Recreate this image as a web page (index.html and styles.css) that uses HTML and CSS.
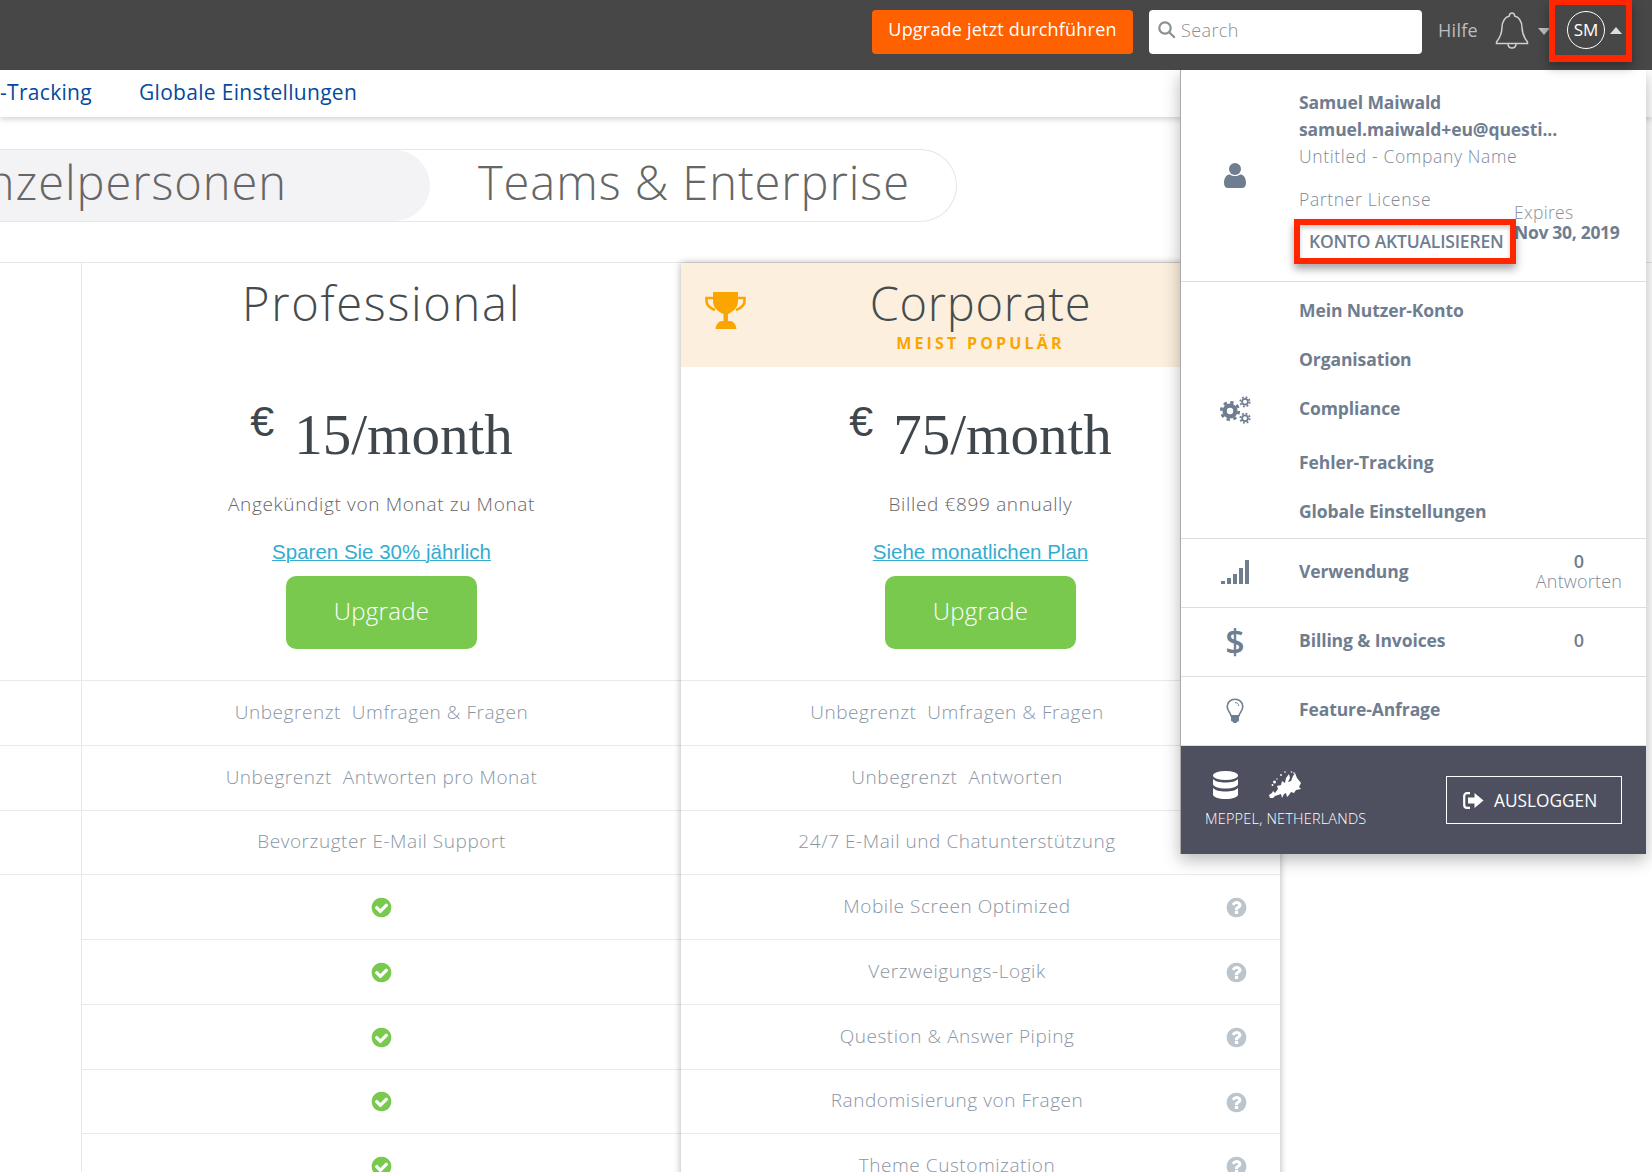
FILE: index.html
```html
<!DOCTYPE html>
<html lang="de">
<head>
<meta charset="utf-8">
<title>Upgrade</title>
<link rel="stylesheet" href="styles.css">
</head>
<body>
<svg class="defs" width="0" height="0">
  <symbol id="check" viewBox="0 0 1792 1792"><path d="M1412 734q0-28-18-46l-91-90q-19-19-45-19t-45 19l-408 407-226-226q-19-19-45-19t-45 19l-91 90q-18 18-18 46 0 27 18 45l362 362q19 19 45 19 27 0 46-19l543-543q18-18 18-45zm252 162q0 209-103 385.5t-279.5 279.5-385.5 103-385.5-103-279.5-279.5-103-385.5 103-385.5 279.5-279.5 385.5-103 385.5 103 279.5 279.5 103 385.5z"/></symbol>
  <symbol id="question" viewBox="0 0 1792 1792"><path d="M1024 1376v-192q0-14-9-23t-23-9h-192q-14 0-23 9t-9 23v192q0 14 9 23t23 9h192q14 0 23-9t9-23zm256-672q0-88-55.5-163t-138.5-116-170-41q-243 0-371 213-15 24 8 42l132 100q7 6 19 6 16 0 25-12 53-68 86-92 34-24 86-24 48 0 85.5 26t37.5 59q0 38-20 61t-68 45q-63 28-115.5 86.5t-52.5 125.5v36q0 14 9 23t23 9h192q14 0 23-9t9-23q0-19 21.5-49.5t54.5-49.5q32-18 49-28.5t46-35 44.5-48 28-60.5 12.5-81zm384 192q0 209-103 385.5t-279.5 279.5-385.5 103-385.5-103-279.5-279.5-103-385.5 103-385.5 279.5-279.5 385.5-103 385.5 103 279.5 279.5 103 385.5z"/></symbol>
</svg>
<div class="page">
  <header class="topbar">
    <a class="btn-upgrade-now">Upgrade jetzt durchführen</a>
    <div class="search">
      <svg class="search-icon" viewBox="0 0 18 18"><circle cx="7" cy="7" r="5.700"/><line x1="11.200" y1="11.200" x2="16.800" y2="16.800"/></svg>
      <span>Search</span>
    </div>
    <span class="help">Hilfe</span>
    <svg class="bell" viewBox="0 0 34 37"><path d="M17 1c-1.600 0-2.600 1-2.600 3C9 5.500 7.200 10 7 15.500c-.2 6.500-1.800 10-5.500 14.500v1.500h31V30c-3.700-4.500-5.300-8-5.500-14.500C26.800 10 25 5.500 19.600 4c0-2-1-3-2.600-3z"/><path d="M13 31.500c0 3 1.800 4.500 4 4.500s4-1.500 4-4.500"/></svg>
    <span class="caret-down"></span>
    <div class="user-menu">
      <span class="avatar">SM</span>
      <span class="caret-up"></span>
    </div>
  </header>

  <nav class="subnav">
    <span class="subnav-clip"><a>Fehler-Tracking</a></span>
    <a>Globale Einstellungen</a>
  </nav>

  <div class="toggle">
    <span class="toggle-active"><span>Einzelpersonen</span></span>
    <span class="toggle-other">Teams &amp; Enterprise</span>
  </div>

  <section class="table">
    <div class="col col-stub">
      <div class="top"></div>
      <div class="row"></div><div class="row"></div><div class="row"></div><div class="row"></div>
    </div>

    <div class="col col-pro">
      <div class="top">
        <div class="plan-head">
          <h2>Professional</h2>
        </div>
        <div class="price"><span class="euro">€</span>15/month</div>
        <p class="billed">Angekündigt von Monat zu Monat</p>
        <a class="switch">Sparen Sie 30% jährlich</a>
        <a class="btn-plan">Upgrade</a>
      </div>
      <div class="row">Unbegrenzt&nbsp; Umfragen &amp; Fragen</div>
      <div class="row">Unbegrenzt&nbsp; Antworten pro Monat</div>
      <div class="row">Bevorzugter E-Mail Support</div>
      <div class="row"><svg class="ok"><use href="#check"/></svg></div>
      <div class="row"><svg class="ok"><use href="#check"/></svg></div>
      <div class="row"><svg class="ok"><use href="#check"/></svg></div>
      <div class="row"><svg class="ok"><use href="#check"/></svg></div>
      <div class="row"><svg class="ok"><use href="#check"/></svg></div>
    </div>

    <div class="col col-corp">
      <div class="top">
        <div class="plan-head plan-head-hot">
          <svg class="trophy" viewBox="0 0 41 37">
            <path class="trophy-cup" d="M8 0h25v9c0 7-5.500 11-10 13v7h2c3 0 6 3 6.500 8H10.500C11 32 14 29 17 29h1.500v-7C13.500 20 8 16 8 9z"/>
            <path class="trophy-handle" d="M8 6H1.500v3c0 4 3 7 8.500 9M33 6h6.500v3c0 4-3 7-8.500 9"/>
          </svg>
          <h2>Corporate</h2>
          <div class="popular">MEIST POPULÄR</div>
        </div>
        <div class="price"><span class="euro">€</span>75/month</div>
        <p class="billed">Billed €899 annually</p>
        <a class="switch">Siehe monatlichen Plan</a>
        <a class="btn-plan">Upgrade</a>
      </div>
      <div class="row row-feature">Unbegrenzt&nbsp; Umfragen &amp; Fragen</div>
      <div class="row row-feature">Unbegrenzt&nbsp; Antworten</div>
      <div class="row row-feature">24/7 E-Mail und Chatunterstützung</div>
      <div class="row row-feature">Mobile Screen Optimized<svg class="help-dot"><use href="#question"/></svg></div>
      <div class="row row-feature">Verzweigungs-Logik<svg class="help-dot"><use href="#question"/></svg></div>
      <div class="row row-feature">Question &amp; Answer Piping<svg class="help-dot"><use href="#question"/></svg></div>
      <div class="row row-feature">Randomisierung von Fragen<svg class="help-dot"><use href="#question"/></svg></div>
      <div class="row row-feature">Theme Customization<svg class="help-dot"><use href="#question"/></svg></div>
    </div>
  </section>

  <aside class="dropdown">
    <div class="dd-section dd-profile">
      <div class="dd-icon">
        <svg class="ic-person" viewBox="0 0 22 25"><circle cx="11" cy="6" r="6"/><path d="M0 20c0-6 3-8.500 6-8.500 1.500 1 3 1.500 5 1.500s3.500-.5 5-1.500c3 0 6 2.500 6 8.500 0 3-1.500 5-4 5H4c-2.500 0-4-2-4-5z"/></svg>
      </div>
      <div class="profile-info">
        <div class="p-strong">Samuel Maiwald</div>
        <div class="p-strong">samuel.maiwald+eu@questi...</div>
        <div class="p-light">Untitled - Company Name</div>
        <div class="license-row">
          <div class="license">
            <div class="p-light">Partner License</div>
            <a class="btn-konto">KONTO AKTUALISIEREN</a>
          </div>
          <div class="expires">
            <div class="expires-label">Expires</div>
            <div class="expires-date">Nov 30, 2019</div>
          </div>
        </div>
      </div>
    </div>

    <div class="dd-section dd-settings">
      <div class="dd-icon">
        <svg class="ic-cogs" viewBox="0 0 31 28">
          <circle class="gear-ring" cx="10" cy="15" r="8.700" stroke-width="2.800" stroke-dasharray="3.400 3.430"/>
          <circle class="gear-body" cx="10" cy="15" r="5.400" stroke-width="4.400"/>
          <circle class="gear-ring" cx="25" cy="5.800" r="4.700" stroke-width="1.800" stroke-dasharray="1.850 1.840"/>
          <circle class="gear-body" cx="25" cy="5.800" r="2.900" stroke-width="1.800"/>
          <circle class="gear-ring" cx="25" cy="22.200" r="4.700" stroke-width="1.800" stroke-dasharray="1.850 1.840"/>
          <circle class="gear-body" cx="25" cy="22.200" r="2.900" stroke-width="1.800"/>
        </svg>
      </div>
      <ul class="settings-list">
        <li>Mein Nutzer-Konto</li>
        <li>Organisation</li>
        <li>Compliance</li>
        <li class="gap">Fehler-Tracking</li>
        <li>Globale Einstellungen</li>
      </ul>
    </div>

    <div class="dd-section dd-line">
      <div class="dd-icon">
        <svg class="ic-signal" viewBox="0 0 29 24"><rect x="0" y="21" width="4" height="3"/><rect x="6" y="18" width="4" height="6"/><rect x="12" y="14" width="4" height="10"/><rect x="18" y="8" width="4" height="16"/><rect x="24" y="0" width="4" height="24"/></svg>
      </div>
      <span class="dd-label">Verwendung</span>
      <span class="dd-value"><b>0</b><i>Antworten</i></span>
    </div>

    <div class="dd-section dd-line">
      <div class="dd-icon"><span class="ic-dollar">$</span></div>
      <span class="dd-label">Billing &amp; Invoices</span>
      <span class="dd-value"><b>0</b></span>
    </div>

    <div class="dd-section dd-line">
      <div class="dd-icon">
        <svg class="ic-bulb" viewBox="0 0 18 25"><path class="bulb-glass" d="M9 1.200C4.500 1.200 1.200 4.500 1.200 8.500c0 4.500 3.300 6 3.800 9.300h8c.5-3.300 3.800-4.800 3.800-9.300 0-4-3.300-7.300-7.800-7.300z"/><path class="bulb-base" d="M5 18h8v4c0 1-.8 1.500-1.500 1.500-.5 1-1.500 1.500-2.500 1.500s-2-.5-2.500-1.500C5.800 23.500 5 23 5 22z"/><path class="bulb-glint" d="M9 4.500c2 0 3.800 1.500 3.800 3.500"/></svg>
      </div>
      <span class="dd-label">Feature-Anfrage</span>
    </div>

    <div class="dd-footer">
      <div class="region">
        <div class="region-icons">
          <svg class="ic-db" viewBox="0 0 25 28"><ellipse cx="12.500" cy="4.500" rx="12.500" ry="4.500"/><path d="M0 8c2 2.500 7 3.500 12.500 3.500S23 10.500 25 8v5c0 2.500-5.500 4.500-12.500 4.500S0 15.500 0 13z"/><path d="M0 17c2 2.500 7 3.500 12.500 3.500S23 19.500 25 17v6.500c0 2.500-5.500 4.500-12.500 4.500S0 26 0 23.500z"/></svg>
          <svg class="ic-eu" viewBox="0 0 32 28"><path d="M0 24l3-2 1-2 2 2 3-4-1-3 4-1 1-4 3 2 1-5 3-4 1 4-2 4 3-1 2-5 2-3 2 5 4 5-2 4 2 2-5 1-2 3-3-1-2 3-2 2-1-4-2 1-2 4-1-4-3 1-3 1-2 2-3 0z"/><circle cx="12" cy="4" r=".9"/><circle cx="16" cy="1" r=".8"/><circle cx="22.500" cy="1" r=".8"/><circle cx="25" cy="2" r=".8"/><circle cx="5.500" cy="11" r="1.500"/><circle cx="3.500" cy="14" r="1"/><circle cx="8" cy="8" r=".7"/></svg>
        </div>
        <div class="region-name">MEPPEL, NETHERLANDS</div>
      </div>
      <a class="btn-logout">
        <svg class="ic-logout" viewBox="0 0 21 17"><path class="logout-frame" d="M7 1.200H4C2.400 1.200 1.200 2.400 1.200 4v9c0 1.600 1.200 2.800 2.800 2.800h3"/><path class="logout-arrow" d="M5 5.500h6.500V1L20.500 8.500 11.500 16v-4.500H5z"/></svg>
        <span class="logout-text">AUSLOGGEN</span>
      </a>
    </div>
  </aside>
</div>
</body>
</html>
```

FILE: styles.css
```css
* { box-sizing: border-box; }
html, body { margin: 0; padding: 0; background: #fff; }
.defs { position: absolute; }
.page {
  position: relative;
  width: 1652px;
  height: 1172px;
  overflow: hidden;
  background: #fff;
  font-family: "Open Sans", "Noto Sans", sans-serif;
  color: #666;
}
a { display: block; }
h2, p, ul { margin: 0; padding: 0; }

/* top bar */
.topbar {
  height: 70px;
  background: #474747;
  display: flex;
  align-items: flex-start;
  position: relative;
  z-index: 3;
}
.btn-upgrade-now {
  margin: 10px 0 0 872px;
  width: 261px;
  height: 44px;
  background: #ff6000;
  border-radius: 4px;
  color: #fff;
  font-size: 18px;
  line-height: 38px;
  text-align: center;
  letter-spacing: .2px;
}
.search {
  margin: 10px 0 0 16px;
  width: 273px;
  height: 44px;
  background: #fff;
  border-radius: 4px;
  display: flex;
  align-items: center;
  padding: 0 0 4px 9px;
  color: #8e8e8e;
  font-size: 18px;
  font-weight: 300;
  letter-spacing: .4px;
  gap: 5px;
}
.search-icon { width: 18px; height: 18px; fill: none; stroke: #8e8e8e; stroke-width: 2.200; }
.help {
  margin: 18px 0 0 16px;
  color: #bdbdbd;
  font-size: 18px;
  line-height: 24px;
  letter-spacing: .3px;
  width: 42px;
}
.bell {
  margin: 12px 0 0 15px;
  width: 34px;
  height: 37px;
  fill: none;
  stroke: #cfcfcf;
  stroke-width: 1.500;
}
.caret-down {
  margin: 28px 0 0 9px;
  width: 0;
  height: 0;
  border-left: 6px solid transparent;
  border-right: 6px solid transparent;
  border-top: 7px solid #bdbdbd;
}
.user-menu {
  margin-left: -1px;
  width: 83px;
  height: 62px;
  border: 6px solid #ff2600;
  border-top-width: 5px;
  border-bottom-width: 7px;
  box-shadow: 0 5px 10px rgba(0,0,0,.35);
  display: flex;
  align-items: flex-start;
}
.avatar {
  margin: 6px 0 0 12px;
  width: 38px;
  height: 38px;
  border: 1px solid #fff;
  border-radius: 50%;
  color: #fff;
  font-size: 17px;
  line-height: 36px;
  text-align: center;
}
.caret-up {
  margin: 22px 0 0 5px;
  width: 0;
  height: 0;
  border-left: 6.500px solid transparent;
  border-right: 6.500px solid transparent;
  border-bottom: 7px solid #ddd;
}

/* sub navigation */
.subnav {
  height: 47px;
  display: flex;
  align-items: center;
  gap: 47px;
  padding-bottom: 3px;
  color: #034a9c;
  font-size: 21px;
  letter-spacing: .3px;
  background: #fff;
  box-shadow: 0 2px 6px rgba(0,0,0,.18);
  position: relative;
  z-index: 1;
}
.subnav-clip {
  width: 92px;
  display: flex;
  justify-content: flex-end;
  overflow: hidden;
  white-space: nowrap;
  flex: none;
}

/* plan type toggle */
.toggle {
  margin-top: 32px;
  width: 957px;
  height: 73px;
  display: flex;
  border: 1px solid #e6e6e6;
  border-left: 0;
  border-radius: 0 37px 37px 0;
  font-size: 47px;
  font-weight: 300;
  letter-spacing: .95px;
  line-height: 64px;
  color: #666;
}
.toggle-active {
  width: 430px;
  background: #f3f2f5;
  border-radius: 0 36px 36px 0;
  display: flex;
  justify-content: flex-end;
  overflow: hidden;
  white-space: nowrap;
  padding-right: 143px;
  flex: none;
}
.toggle-other { margin-left: 48px; white-space: nowrap; }

/* pricing table */
.table {
  margin-top: 40px;
  display: flex;
  align-items: flex-start;
  border-top: 1px solid #e6e6e6;
}
.col { flex: none; text-align: center; }
.col-stub { width: 81px; }
.col-pro { width: 600px; border-left: 1px solid #e8e8e8; }
.col-corp {
  width: 599px;
  background: #fff;
  box-shadow: 0 0 7px rgba(0,0,0,.32);
  position: relative;
  height: 920px;
}
.top { height: 417px; }
.plan-head { height: 104px; padding-top: 11px; position: relative; }
.plan-head-hot { background: #fdefdd; }
.plan-head h2 {
  font-size: 47px;
  line-height: 58px;
  font-weight: 300;
  letter-spacing: .7px;
  color: #444c50;
}
.col-pro .plan-head h2 { letter-spacing: 1.700px; }
.popular {
  color: #faa500;
  font-size: 16px;
  line-height: 20px;
  font-weight: 700;
  letter-spacing: 3.200px;
  margin-top: 1px;
}
.trophy { position: absolute; left: 24px; top: 29px; width: 41px; height: 37px; }
.trophy-cup { fill: #faa500; }
.trophy-handle { fill: none; stroke: #faa500; stroke-width: 2.600; }
.price {
  margin-top: 22px;
  font-family: "Liberation Serif", serif;
  font-size: 57px;
  line-height: 64px;
  color: #3f464c;
}
.euro {
  font-family: "Liberation Sans", sans-serif;
  font-size: 43px;
  vertical-align: 18px;
  margin-right: 20px;
}
.billed {
  margin-top: 23px;
  font-size: 19px;
  line-height: 28px;
  font-weight: 300;
  letter-spacing: .65px;
  color: #666;
}
.switch {
  margin-top: 20px;
  font-family: "Liberation Sans", sans-serif;
  font-size: 20.500px;
  line-height: 28px;
  color: #34abd0;
  text-decoration: underline;
  text-decoration-thickness: 1px;
}
.btn-plan {
  margin: 10px auto 0;
  width: 191px;
  height: 73px;
  border-radius: 10px;
  background: #7ac94f;
  color: #fff;
  font-size: 24px;
  font-weight: 300;
  letter-spacing: .3px;
  line-height: 70px;
}
.row {
  height: 64.750px;
  border-top: 1px solid #e9e9e9;
  display: flex;
  align-items: center;
  justify-content: center;
  font-size: 19px;
  font-weight: 300;
  letter-spacing: .55px;
  color: #8a95a4;
  padding-bottom: 2px;
  position: relative;
}
.row-feature { padding-right: 47px; }
.ok { width: 23px; height: 23px; fill: #7ac94f; margin-top: 3px; }
.help-dot { position: absolute; left: 544px; top: 21px; width: 23px; height: 23px; fill: #bcc4cc; }

/* account dropdown */
.dropdown {
  position: absolute;
  left: 1180px;
  top: 70px;
  width: 466px;
  height: 784px;
  background: #fff;
  border-left: 1px solid #aaa;
  box-shadow: 0 6px 16px rgba(0,0,0,.28);
  display: flex;
  flex-direction: column;
  z-index: 2;
  color: #6f7d90;
}
.dd-section { display: flex; flex: none; border-bottom: 1px solid #ddd; }
.dd-icon {
  width: 118px;
  padding-right: 10px;
  flex: none;
  display: flex;
  align-items: center;
  justify-content: center;
}
.dd-profile { height: 212px; padding-top: 19px; }
.dd-profile .dd-icon { height: 99px; align-items: flex-end; }
.p-strong { font-size: 17.500px; line-height: 27px; font-weight: 700; letter-spacing: -.1px; white-space: nowrap; }
.p-light { font-size: 17.500px; line-height: 27px; font-weight: 300; letter-spacing: .65px; color: #7f8a99; white-space: nowrap; }
.license-row { display: flex; margin-top: 16px; }
.license { width: 215px; flex: none; }
.btn-konto {
  margin: 6px 0 0 -5px;
  width: 222px;
  height: 45px;
  border: 6px solid #ff2600;
  box-shadow: 0 5px 8px rgba(0,0,0,.35), inset 0 3px 4px rgba(0,0,0,.2);
  background: #fff;
  font-size: 17.500px;
  font-weight: 600;
  letter-spacing: -.2px;
  line-height: 33px;
  padding-left: 9px;
  white-space: nowrap;
  position: relative;
  z-index: 1;
}
.expires { padding-top: 16px; white-space: nowrap; }
.expires-label { font-size: 17.500px; line-height: 20px; font-weight: 300; letter-spacing: .3px; color: #8a8f98; }
.expires-date { font-size: 17.500px; line-height: 20px; font-weight: 700; letter-spacing: -.3px; }
.dd-settings { height: 257px; }
.settings-list { list-style: none; padding-top: 4px; font-size: 17.500px; font-weight: 700; letter-spacing: -.1px; }
.settings-list li { height: 49px; line-height: 49px; white-space: nowrap; }
.settings-list .gap { margin-top: 5px; }
.dd-line { height: 69px; align-items: stretch; }
.dd-line .dd-icon { padding-bottom: 2px; }
.dd-label { font-size: 17.500px; font-weight: 700; letter-spacing: -.1px; align-self: center; flex: 1; white-space: nowrap; margin-bottom: 4px; }
.dd-value {
  width: 118px;
  margin-right: 8px;
  margin-bottom: 4px;
  align-self: center;
  display: flex;
  flex-direction: column;
  align-items: center;
  font-size: 18px;
}
.dd-value b { font-weight: 600; line-height: 20px; }
.dd-value i { font-style: normal; font-weight: 300; line-height: 20px; letter-spacing: .2px; color: #7f8a99; }
.ic-person { width: 22px; height: 25px; fill: #6f7d90; }
.ic-cogs { width: 31px; height: 28px; }
.gear-ring, .gear-body { fill: none; stroke: #6f7d90; }
.ic-signal { width: 29px; height: 24px; fill: #6f7d90; }
.ic-dollar { font-size: 34px; font-weight: 600; line-height: 1; }
.ic-bulb { width: 18px; height: 25px; }
.bulb-glass { fill: none; stroke: #6f7d90; stroke-width: 1.600; }
.bulb-base { fill: #6f7d90; }
.bulb-glint { fill: none; stroke: #6f7d90; stroke-width: 1; }
.dd-footer {
  flex: 1;
  background: #4e5060;
  display: flex;
  align-items: center;
  justify-content: space-between;
  padding: 0 24px;
  color: #fff;
}
.region-icons { display: flex; gap: 31px; padding-left: 8px; }
.ic-db { width: 25px; height: 28px; fill: #fff; }
.ic-eu { width: 32px; height: 28px; fill: #fff; }
.region-name { margin-top: 11px; padding-bottom: 1px; font-size: 14.500px; line-height: 18px; font-weight: 300; letter-spacing: .2px; white-space: nowrap; }
.btn-logout {
  width: 176px;
  height: 48px;
  border: 1px solid #fff;
  display: flex;
  align-items: center;
  padding-left: 16px;
  gap: 10px;
  font-size: 17.300px;
  line-height: 22px;
}
.logout-text { padding-top: 2px; }
.ic-logout { width: 21px; height: 17px; }
.logout-frame { fill: none; stroke: #fff; stroke-width: 2.200; }
.logout-arrow { fill: #fff; }
```
